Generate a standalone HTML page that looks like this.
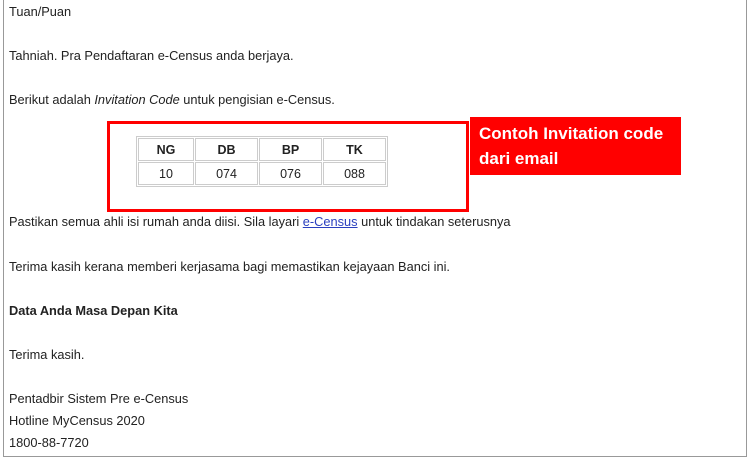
<!DOCTYPE html>
<html><head><style>
body{margin:0;width:750px;height:458px;background:#fff;position:relative;overflow:hidden;font-family:"Liberation Sans",sans-serif;font-size:12.8px;color:#222}
.frame{position:absolute;left:3px;top:-2px;width:742px;height:457px;border:1px solid #999}
.t{position:absolute;left:9px;white-space:nowrap;line-height:16px}
a{color:#2a3fbf;text-decoration:underline}
.rb{position:absolute;left:107px;top:121px;width:356px;height:85px;border:3px solid #f00}
.lab{position:absolute;left:470px;top:117px;width:211px;height:58px;background:#f00;color:#fff;font-weight:bold;font-size:17px;line-height:25px;box-sizing:border-box;padding:4px 0 0 9px;white-space:nowrap}
table{position:absolute;left:136px;top:136px;border-collapse:separate;border-spacing:1px;border:1px solid #ccc;font-size:12.5px}
td{border:1px solid #ccc;text-align:center;height:21px;padding:0}
</style></head><body>
<div class="frame"></div>
<div class="t" style="top:4px">Tuan/Puan</div>
<div class="t" style="top:48px">Tahniah. Pra Pendaftaran e-Census anda berjaya.</div>
<div class="t" style="top:92px">Berikut adalah <i>Invitation Code</i> untuk pengisian e-Census.</div>
<div class="rb"></div>
<table><tr style="font-weight:bold"><td style="width:54px">NG</td><td style="width:61px">DB</td><td style="width:61px">BP</td><td style="width:61px">TK</td></tr>
<tr><td>10</td><td>074</td><td>076</td><td>088</td></tr></table>
<div class="lab">Contoh Invitation code<br>dari email</div>
<div class="t" style="top:214px">Pastikan semua ahli isi rumah anda diisi. Sila layari <a>e-Census</a> untuk tindakan seterusnya</div>
<div class="t" style="top:259px">Terima kasih kerana memberi kerjasama bagi memastikan kejayaan Banci ini.</div>
<div class="t" style="top:303px;font-weight:bold">Data Anda Masa Depan Kita</div>
<div class="t" style="top:347px">Terima kasih.</div>
<div class="t" style="top:391px">Pentadbir Sistem Pre e-Census</div>
<div class="t" style="top:413px">Hotline MyCensus 2020</div>
<div class="t" style="top:435px">1800-88-7720</div>
</body></html>
